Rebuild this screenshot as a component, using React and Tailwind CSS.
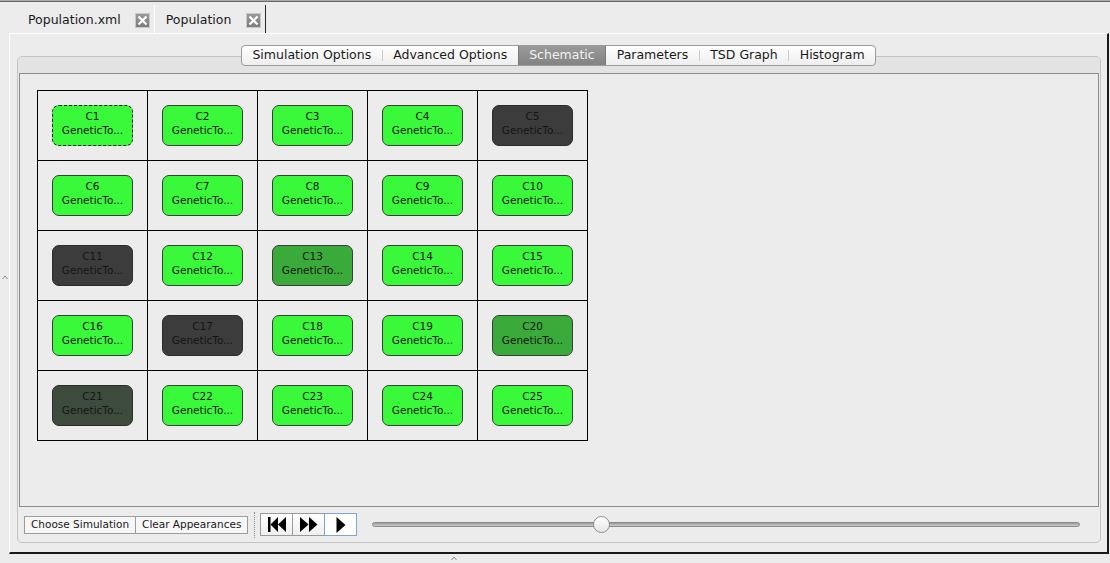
import React from "react";

const CELLS = [
  ["C1", "g", true], ["C2", "g"], ["C3", "g"], ["C4", "g"], ["C5", "d"],
  ["C6", "g"], ["C7", "g"], ["C8", "g"], ["C9", "g"], ["C10", "g"],
  ["C11", "d"], ["C12", "g"], ["C13", "m"], ["C14", "g"], ["C15", "g"],
  ["C16", "g"], ["C17", "d"], ["C18", "g"], ["C19", "g"], ["C20", "m"],
  ["C21", "o"], ["C22", "g"], ["C23", "g"], ["C24", "g"], ["C25", "g"],
];

const TONES = {
  g: "bg-[#3af93a]",
  m: "bg-[#3aaa3a]",
  d: "bg-[#3c3c3c]",
  o: "bg-[#3d4b3d]",
};

const TABS = ["Simulation Options", "Advanced Options", "Schematic", "Parameters", "TSD Graph", "Histogram"];

function CloseBox() {
  return (
    <div className="flex h-[15px] w-[15px] items-center justify-center border border-[#c8c8c8] bg-gradient-to-b from-[#9a9a9a] to-[#7c7c7c]">
      <svg width="11" height="11" viewBox="0 0 11 11">
        <path d="M1.5 1.5 L9.5 9.5 M9.5 1.5 L1.5 9.5" stroke="#fff" strokeWidth="2.2" />
      </svg>
    </div>
  );
}

function Chip({ label, tone, selected }) {
  const border = selected ? "border-dashed border-[#111]" : tone === "g" || tone === "m" ? "border-[#3c3c3c]" : "border-[#2c2c2c]";
  return (
    <div className={`flex h-[41px] w-[81px] flex-col items-center rounded-[7px] border pt-[3px] text-[10.5px] leading-[14px] text-[#151515] ${border} ${TONES[tone]}`}>
      <span>{label}</span>
      <span>GeneticTo...</span>
    </div>
  );
}

function PlayButton({ active, children }) {
  return (
    <div
      className={`-ml-px flex h-[23px] w-[33px] items-center justify-center border first:ml-0 ${
        active ? "relative z-10 border-[#7ea3d6] bg-white" : "border-[#9a9a9a] bg-gradient-to-b from-white to-[#efefef]"
      }`}
    >
      {children}
    </div>
  );
}

export default function App() {
  return (
    <div
      className="relative h-[563px] w-[1110px] overflow-hidden bg-[#ececec] text-[#1a1a1a]"
      style={{ fontFamily: "'DejaVu Sans', 'Liberation Sans', sans-serif" }}
    >
      <div className="h-px bg-[#a8a8a8]" />
      <div className="h-px bg-[#6a6a6a]" />

      {/* document tabs */}
      <div className="flex h-[31px] items-end pl-[10px]">
        <div className="flex h-[28px] items-center pl-[18px] pr-[4px] pt-[3px] text-[12.5px]">
          <span>Population.xml</span>
          <div className="ml-[14px]">
            <CloseBox />
          </div>
        </div>
        <div className="flex h-[28px] items-center border-l border-r border-l-white border-r-[#2a2a2a] pl-[11px] pr-[4px] pt-[3px] text-[12.5px]">
          <span>Population</span>
          <div className="ml-[15px]">
            <CloseBox />
          </div>
        </div>
      </div>

      {/* window */}
      <div className="ml-[9px] h-[521px] w-[1100px] border-b-2 border-l border-r-2 border-t border-b-[#1a1a1a] border-l-white border-r-[#1a1a1a] border-t-white">
        <div className="relative z-10 flex justify-center pt-[11px]">
          <div className="flex h-[21px] overflow-hidden rounded-[4px] border border-[#9b9b9b] bg-gradient-to-b from-white to-[#eeeeee] text-[12.5px]">
            {TABS.map((t, i) => {
              const sel = t === "Schematic";
              const prevSel = TABS[i - 1] === "Schematic";
              return (
                <React.Fragment key={t}>
                  {i > 0 && !sel && !prevSel && <div className="my-[4px] w-px bg-[#cdcdcd]" />}
                  <div
                    className={`flex items-center px-[10.5px] ${
                      sel ? "border-x border-[#7a7a7a] bg-gradient-to-b from-[#9a9a9a] to-[#838383] text-[#f2f2f2]" : ""
                    }`}
                  >
                    {t}
                  </div>
                </React.Fragment>
              );
            })}
          </div>
        </div>

        <div className="-mt-[10px] ml-[7px] flex h-[487px] w-[1084px] flex-col overflow-hidden rounded-[5px] border border-[#c4c4c4] bg-[#ececec]">
          <div className="h-[16px] shrink-0 bg-[#e3e3e3]" />
          <div className="mx-px h-[434px] shrink-0 border border-[#8c8c8c] bg-[#ececec] pl-[17px] pt-[16px]">
            <div className="grid w-max grid-cols-[repeat(5,110px)] border-l border-t border-black">
              {CELLS.map(([label, tone, selected]) => (
                <div key={label} className="flex h-[70px] w-[110px] items-center justify-center border-b border-r border-black">
                  <Chip label={label} tone={tone} selected={selected} />
                </div>
              ))}
            </div>
          </div>

          {/* controls */}
          <div className="flex h-[34px] items-center pl-[6px] pr-[20px] pt-px">
            <div className="flex h-[18px] items-center border border-[#9c9c9c] bg-[#f7f7f7] px-[6px] text-[10.5px]">Choose Simulation</div>
            <div className="-ml-px flex h-[18px] items-center border border-[#9c9c9c] bg-[#f7f7f7] px-[6px] text-[10.5px]">Clear Appearances</div>
            <div className="ml-[6px] h-[26px] border-l border-dotted border-[#8a8a8a]" />
            <div className="ml-[5px] flex">
              <PlayButton>
                <svg width="20" height="15" viewBox="0 0 20 15">
                  <rect x="1" y="0" width="2.5" height="15" fill="#000" />
                  <path d="M3.5 7.5 L11 0 V15 Z M11 7.5 L19 0 V15 Z" fill="#000" />
                </svg>
              </PlayButton>
              <PlayButton>
                <svg width="18" height="15" viewBox="0 0 18 15">
                  <path d="M0 0 L8.5 7.5 L0 15 Z M9 0 L17.5 7.5 L9 15 Z" fill="#000" />
                </svg>
              </PlayButton>
              <PlayButton active>
                <svg width="10" height="16" viewBox="0 0 10 16">
                  <path d="M0.5 0 L9.5 8 L0.5 16 Z" fill="#000" />
                </svg>
              </PlayButton>
            </div>
            <div className="relative ml-[15px] flex h-[17px] flex-1 items-center">
              <div className="h-[5px] w-full rounded-full border border-[#8c8c8c] bg-gradient-to-b from-[#9a9a9a] to-[#cfcfcf]" />
              <div className="absolute left-[221px] top-0 h-[17px] w-[17px] rounded-full border border-[#8c8c8c] bg-gradient-to-b from-white to-[#e6e6e6]" />
            </div>
          </div>
        </div>
      </div>

      {/* splitter handles */}
      <svg className="absolute left-[2px] top-[275px]" width="6" height="5" viewBox="0 0 6 5">
        <path d="M0.5 4 L3 1 L5.5 4" stroke="#8a8a8a" fill="none" />
      </svg>
      <svg className="absolute left-[451px] top-[556px]" width="6" height="5" viewBox="0 0 6 5">
        <path d="M0.5 4 L3 1 L5.5 4" stroke="#8a8a8a" fill="none" />
      </svg>
    </div>
  );
}
